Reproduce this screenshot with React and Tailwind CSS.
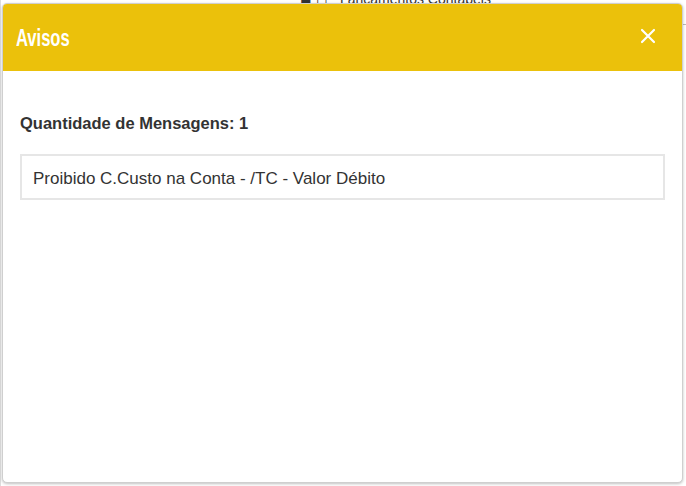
import React from "react";

const App = () => {
  return (
    <div className="relative w-[686px] h-[486px] overflow-hidden bg-white" style={{ fontFamily: "'Liberation Sans', Arial, sans-serif" }}>
      {/* background page peeking out behind the modal */}
      <div className="absolute top-[-11px] left-[300px] flex gap-3 text-[14px] text-[#333]">
        <span>◼ ◻</span>
        <span>Lançamentos Contábeis</span>
      </div>
      <div className="absolute left-0 top-0 h-full w-[1px] bg-[#ddd]" />
      <div className="absolute right-0 top-[24px] h-[1px] w-[3px] bg-[#bbb]" />

      {/* modal */}
      <div className="absolute left-[2px] top-[3px] w-[681px] h-[480px] flex flex-col rounded-[5px] bg-white border border-[#cfcfcf] shadow-[0_1px_3px_rgba(0,0,0,0.25)] overflow-hidden">
        <div className="h-[67px] shrink-0 flex items-center justify-between bg-[#EBC10B] pl-[13px] pr-[26px]">
          <h1 className="text-white font-bold text-[23px] leading-[28px] scale-x-[0.72] origin-left">Avisos</h1>
          <button className="text-white mt-[-3px]">
            <svg width="16" height="16" viewBox="0 0 16 16" fill="none" stroke="currentColor" strokeWidth="2.2" strokeLinecap="round">
              <path d="M2 2 L14 14 M14 2 L2 14" />
            </svg>
          </button>
        </div>

        <div className="px-[17px] pt-[41px]">
          <p className="text-[16.5px] leading-[22px] font-bold text-[#333]">Quantidade de Mensagens: 1</p>
          <div className="mt-[20px] h-[46px] flex items-center border-2 border-[#e6e6e6] px-[11px] pt-[4px]">
            <span className="text-[17px] text-[#333]">Proibido C.Custo na Conta - /TC - Valor Débito</span>
          </div>
        </div>
      </div>
    </div>
  );
};

export default App;
